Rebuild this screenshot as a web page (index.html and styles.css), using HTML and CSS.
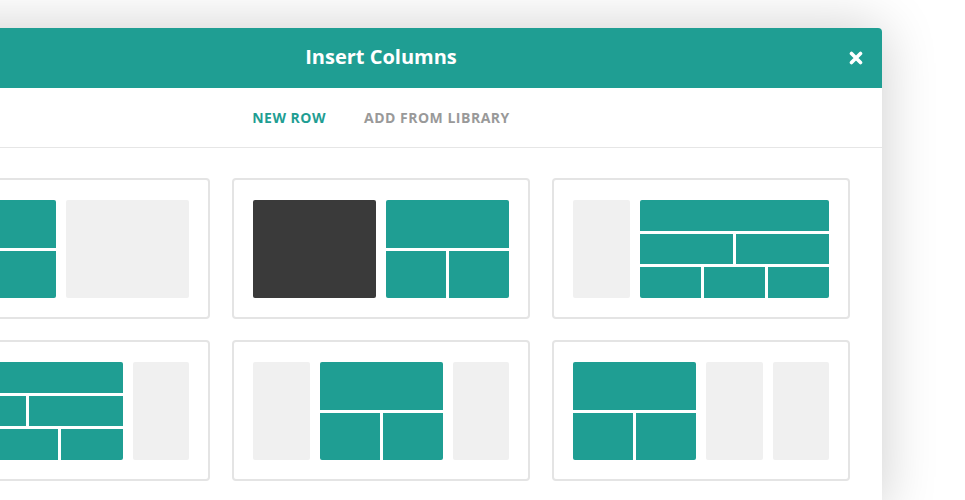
FILE: index.html
```html
<!DOCTYPE html>
<html>
<head>
<meta charset="utf-8">
<link rel="stylesheet" href="styles.css">
</head>
<body>
<div class="modal">
  <div class="header">
    <span></span>
    <h1 class="title">Insert Columns</h1>
    <span class="close"><svg width="14" height="14" viewBox="0 0 14 14"><path d="M2.5 2.5 L11.5 11.5 M11.5 2.5 L2.5 11.5" stroke="#fff" stroke-width="3.6" stroke-linecap="round"/></svg></span>
  </div>
  <div class="tabs">
    <span class="tab active">NEW ROW</span>
    <span class="tab">ADD FROM LIBRARY</span>
  </div>
  <div class="grid">
    <div class="card">
      <div class="layout">
        <div class="col s6 teal"><div class="row"><i></i></div><div class="row"><i></i><i></i></div></div>
        <div class="col s6 light"></div>
      </div>
    </div>
    <div class="card">
      <div class="layout">
        <div class="col s6 dark"></div>
        <div class="col s6 teal"><div class="row"><i></i></div><div class="row"><i></i><i></i></div></div>
      </div>
    </div>
    <div class="card">
      <div class="layout">
        <div class="col s3 light"></div>
        <div class="col s9 teal"><div class="row"><i></i></div><div class="row"><i></i><i></i></div><div class="row"><i></i><i></i><i></i></div></div>
      </div>
    </div>
    <div class="card">
      <div class="layout">
        <div class="col s9 teal"><div class="row"><i></i></div><div class="row"><i></i><i></i></div><div class="row"><i></i><i></i><i></i></div></div>
        <div class="col s3 light"></div>
      </div>
    </div>
    <div class="card">
      <div class="layout">
        <div class="col s3 light"></div>
        <div class="col s6 teal"><div class="row"><i></i></div><div class="row"><i></i><i></i></div></div>
        <div class="col s3 light"></div>
      </div>
    </div>
    <div class="card">
      <div class="layout">
        <div class="col s6 teal"><div class="row"><i></i></div><div class="row"><i></i><i></i></div></div>
        <div class="col s3 light"></div>
        <div class="col s3 light"></div>
      </div>
    </div>
  </div>
</div>
</body>
</html>
```
FILE: styles.css
```css
html, body {
  margin: 0;
  padding: 0;
  background: #fff;
  overflow: hidden;
  height: 500px;
}
body {
  font-family: "Open Sans", "Liberation Sans", sans-serif;
  padding-top: 28px;
}
.modal {
  width: 1002px;
  margin-left: -120px;
  background: #fff;
  border-radius: 4px 4px 0 0;
  box-shadow: 0 0 55px rgba(0, 0, 0, 0.2);
}
.header {
  height: 60px;
  background: #1f9e93;
  border-radius: 4px 4px 0 0;
  display: grid;
  grid-template-columns: 1fr auto 1fr;
  align-items: center;
}
.title {
  margin: 0;
  color: #fff;
  font-size: 20px;
  font-weight: 700;
  line-height: 1;
  padding-bottom: 2px;
}
.close {
  justify-self: end;
  padding-right: 19px;
  display: flex;
}
.tabs {
  height: 59px;
  border-bottom: 1px solid #e6e6e6;
  display: flex;
  justify-content: center;
  align-items: center;
  gap: 38px;
}
.tab {
  font-size: 14px;
  font-weight: 700;
  letter-spacing: 0.5px;
  color: #999;
}
.tab.active {
  color: #1f9e93;
}
.grid {
  padding: 30px 31px 30px 32px;
  display: grid;
  grid-template-columns: repeat(3, 298px);
  column-gap: 22px;
  row-gap: 21px;
}
.card {
  border: 2px solid #e4e4e4;
  border-radius: 4px;
  padding: 20px 19px 19px;
}
.layout {
  height: 98px;
  display: grid;
  grid-template-columns: repeat(12, 1fr);
  column-gap: 10px;
}
.col {
  border-radius: 2px;
  overflow: hidden;
  display: flex;
  flex-direction: column;
  gap: 3px;
}
.s3 { grid-column: span 3; }
.s6 { grid-column: span 6; }
.s9 { grid-column: span 9; }
.light { background: #f0f0f0; }
.dark { background: #3a3a3a; }
.row {
  flex: 1;
  display: flex;
  gap: 3px;
}
.row i {
  flex: 1;
  background: #1f9e93;
}
```
